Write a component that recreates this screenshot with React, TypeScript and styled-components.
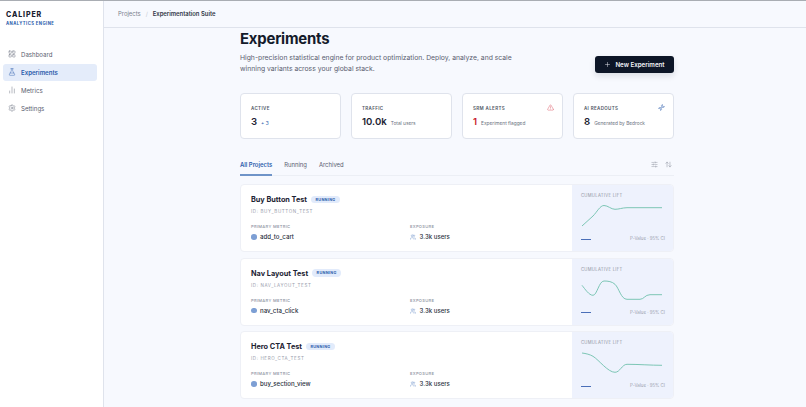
import React from "react";
import styled, { createGlobalStyle } from "styled-components";
import {
  ArrowUpDown,
  ChartNoAxesColumn,
  Dna,
  FlaskConical,
  LayoutGrid,
  Plus,
  Settings,
  SlidersHorizontal,
  TriangleAlert,
  Users,
} from "lucide-react";

const GlobalStyle = createGlobalStyle`
  html, body {
    margin: 0;
    height: 100%;
    overflow: hidden;
    background: #f7f9fe;
    font-family: Inter, "Liberation Sans", sans-serif;
    color: #141b2b;
  }
  * { box-sizing: border-box; }
`;

const navItems = [
  { label: "Dashboard", icon: LayoutGrid },
  { label: "Experiments", icon: FlaskConical, active: true },
  { label: "Metrics", icon: ChartNoAxesColumn },
  { label: "Settings", icon: Settings },
];

const experiments = [
  {
    name: "Buy Button Test",
    id: "ID: BUY_BUTTON_TEST",
    metric: "add_to_cart",
    line: "M1 23 L12 13 C16 9 19 2.5 23 2.5 C27 2.5 30 6.3 34 6.3 C38 6.3 41 4.8 46 4.7 L81 4.7",
  },
  {
    name: "Nav Layout Test",
    id: "ID: NAV_LAYOUT_TEST",
    metric: "nav_cta_click",
    line: "M1 8.3 C4 12 8 18.3 12 18.3 C16 18.3 18 4 23 4 C27 4 31 4.5 34 7.3 C38 11 40 22.3 46 22.3 L59 22.3 C63 22.3 64 17.7 69 17.7 L81 17.7",
  },
  {
    name: "Hero CTA Test",
    id: "ID: HERO_CTA_TEST",
    metric: "buy_section_view",
    line: "M1 3 C5 3.5 9 4.5 12 6.3 C18 10 27 22.3 34 22.3 C39 22.3 41 14.3 46 14.3 C58 14.3 70 15.3 81 15.3",
  },
];

const Shell = styled.div`
  display: flex;
  height: 407px;
  border-top: 1px solid #a9adb3;
`;

const Sidebar = styled.aside`
  flex: 0 0 104px;
  background: #fff;
  border-right: 1px solid #dfe3ec;
  padding: 9px 6px 0 3px;
`;

const Brand = styled.div`
  padding: 0 3px;
  height: 36px;
`;

const BrandName = styled.div`
  font-size: 7px;
  line-height: 9px;
  font-weight: 800;
  letter-spacing: 0.9px;
  color: #1a2130;
`;

const BrandSub = styled.div`
  margin-top: 2px;
  font-size: 4.2px;
  line-height: 6px;
  font-weight: 700;
  letter-spacing: 0.45px;
  color: #2a5bab;
`;

const Nav = styled.nav`
  display: flex;
  flex-direction: column;
  gap: 1.5px;
`;

const NavItem = styled.a<{ $active?: boolean }>`
  display: flex;
  align-items: center;
  gap: 5px;
  height: 16.5px;
  padding-left: 5px;
  border-radius: 3px;
  font-size: 6.1px;
  font-weight: ${(p) => (p.$active ? 600 : 400)};
  color: ${(p) => (p.$active ? "#2a5bab" : "#5a6070")};
  background: ${(p) => (p.$active ? "#e4ecfa" : "transparent")};
`;

const Main = styled.main`
  flex: 1;
  min-width: 0;
  display: flex;
  flex-direction: column;
`;

const TopBar = styled.header`
  flex: 0 0 27px;
  display: flex;
  align-items: center;
  gap: 5px;
  padding-left: 14px;
  padding-bottom: 1px;
  border-bottom: 1px solid #dfe3ec;
  font-size: 5.9px;
  color: #7a808d;
`;

const Crumb = styled.span`
  font-weight: 600;
  color: #2f3645;
`;

const CrumbSlash = styled.span`
  color: #c5c9d2;
`;

const Content = styled.div`
  width: 434px;
  margin-left: 136px;
  padding-top: 2px;
`;

const Head = styled.div`
  display: flex;
  justify-content: space-between;
  align-items: flex-end;
`;

const Title = styled.h1`
  margin: 0;
  font-size: 14.9px;
  line-height: 18px;
  font-weight: 700;
  letter-spacing: -0.2px;
  color: #141b2b;
`;

const Description = styled.p`
  margin: 4px 0 0;
  width: 290px;
  font-size: 6.8px;
  line-height: 11px;
  color: #5a6070;
`;

const NewButton = styled.button`
  display: flex;
  align-items: center;
  justify-content: center;
  gap: 4px;
  width: 79px;
  height: 17px;
  margin-bottom: 1px;
  border: none;
  border-radius: 3px;
  background: #0d1627;
  color: #f3f5fa;
  font: 600 6.2px Inter, sans-serif;
  box-shadow: 0 3px 6px rgba(13, 22, 39, 0.12);
`;

const Stats = styled.div`
  display: grid;
  grid-template-columns: repeat(4, 1fr);
  gap: 10px;
  margin-top: 19px;
`;

const StatCard = styled.div`
  position: relative;
  height: 46px;
  padding: 12px 10px 0;
  background: #fff;
  border: 1px solid #dfe3ec;
  border-radius: 4px;
`;

const StatLabel = styled.div`
  font-size: 4.5px;
  line-height: 6px;
  font-weight: 600;
  letter-spacing: 0.35px;
  color: #4e5563;
`;

const StatRow = styled.div`
  display: flex;
  align-items: baseline;
  gap: 4px;
  margin-top: 3px;
`;

const StatValue = styled.span<{ $alert?: boolean }>`
  font-size: 9.6px;
  line-height: 13px;
  font-weight: 600;
  color: ${(p) => (p.$alert ? "#c8192c" : "#1c2333")};
`;

const StatNote = styled.span<{ $accent?: boolean }>`
  font-size: 4.8px;
  color: ${(p) => (p.$accent ? "#2a5bab" : "#6b7180")};
`;

const StatIcon = styled.span`
  position: absolute;
  top: 10px;
  right: 8px;
  display: flex;
`;

const Tabs = styled.div`
  display: flex;
  align-items: flex-start;
  height: 18px;
  margin-top: 19px;
  gap: 12px;
  border-bottom: 1px solid #eceff5;
`;

const Tab = styled.div<{ $active?: boolean }>`
  height: 18px;
  font-size: 5.9px;
  line-height: 14px;
  font-weight: ${(p) => (p.$active ? 600 : 400)};
  color: ${(p) => (p.$active ? "#2a5bab" : "#5a6070")};
  border-bottom: ${(p) => (p.$active ? "2px solid #6f94c8" : "none")};
`;

const TabTools = styled.div`
  display: flex;
  gap: 7px;
  margin-left: auto;
  margin-top: 3px;
  margin-right: 2px;
  color: #6a7080;
`;

const List = styled.div`
  display: flex;
  flex-direction: column;
  gap: 5.5px;
  margin-top: 8px;
`;

const ExperimentCard = styled.article`
  display: flex;
  height: 68px;
  background: #fff;
  border: 1px solid #eef0f6;
  border-radius: 4px;
  overflow: hidden;
`;

const Info = styled.div`
  flex: 1;
  padding: 9px 10px 0;
`;

const NameRow = styled.div`
  display: flex;
  align-items: center;
  gap: 4px;
`;

const Name = styled.h2`
  margin: 0;
  font-size: 7.3px;
  line-height: 11px;
  font-weight: 700;
  color: #1c2333;
`;

const Badge = styled.span`
  padding: 0 4.5px;
  height: 7.5px;
  line-height: 7.5px;
  border-radius: 4px;
  background: #e2ebfb;
  color: #2a5bab;
  font-size: 3.8px;
  font-weight: 700;
  letter-spacing: 0.3px;
`;

const RefId = styled.div`
  margin-top: 4px;
  font-size: 4.5px;
  line-height: 6px;
  letter-spacing: 0.6px;
  color: #9aa0ad;
`;

const Columns = styled.div`
  display: grid;
  grid-template-columns: 159px 1fr;
  margin-top: 9px;
`;

const ColLabel = styled.div`
  font-size: 4.1px;
  line-height: 6px;
  font-weight: 500;
  letter-spacing: 0.3px;
  color: #8e94a2;
`;

const ColValue = styled.div`
  display: flex;
  align-items: center;
  gap: 3.5px;
  margin-top: 2px;
  font-size: 6.1px;
  line-height: 10px;
  font-weight: 500;
  color: #2a3140;
`;

const Dot = styled.span`
  width: 5.5px;
  height: 5.5px;
  border-radius: 50%;
  background: #7d9fd4;
`;

const ChartPane = styled.div`
  flex: 0 0 101px;
  padding: 8px 8px 0 9px;
  background: #eef2fd;
  display: flex;
  flex-direction: column;
`;

const ChartTitle = styled.div`
  font-size: 4.2px;
  line-height: 6px;
  letter-spacing: 0.3px;
  color: #8e94a2;
`;

const ChartFoot = styled.div`
  display: flex;
  align-items: center;
  justify-content: space-between;
  margin-top: 7px;
  font-size: 4.4px;
  line-height: 6px;
  color: #9aa0ad;
`;

const Legend = styled.span`
  width: 10px;
  height: 1px;
  background: #4a6fb8;
`;

const Spark = styled.svg`
  display: block;
  margin-top: 4px;
  overflow: visible;
`;

export default function App() {
  return (
    <>
      <GlobalStyle />
      <Shell>
        <Sidebar>
          <Brand>
            <BrandName>CALIPER</BrandName>
            <BrandSub>ANALYTICS ENGINE</BrandSub>
          </Brand>
          <Nav>
            {navItems.map((item) => (
              <NavItem key={item.label} $active={item.active}>
                <item.icon size={8} strokeWidth={1.3} />
                {item.label}
              </NavItem>
            ))}
          </Nav>
        </Sidebar>
        <Main>
          <TopBar>
            Projects <CrumbSlash>/</CrumbSlash>
            <Crumb>Experimentation Suite</Crumb>
          </TopBar>
          <Content>
            <Head>
              <div>
                <Title>Experiments</Title>
                <Description>
                  High-precision statistical engine for product optimization.
                  Deploy, analyze, and scale winning variants across your global
                  stack.
                </Description>
              </div>
              <NewButton>
                <Plus size={7} strokeWidth={1.6} />
                New Experiment
              </NewButton>
            </Head>
            <Stats>
              <StatCard>
                <StatLabel>ACTIVE</StatLabel>
                <StatRow>
                  <StatValue>3</StatValue>
                  <StatNote $accent>+ 3</StatNote>
                </StatRow>
              </StatCard>
              <StatCard>
                <StatLabel>TRAFFIC</StatLabel>
                <StatRow>
                  <StatValue>10.0k</StatValue>
                  <StatNote>Total users</StatNote>
                </StatRow>
              </StatCard>
              <StatCard>
                <StatLabel>SRM ALERTS</StatLabel>
                <StatIcon>
                  <TriangleAlert size={7} color="#d8404f" strokeWidth={1.4} />
                </StatIcon>
                <StatRow>
                  <StatValue $alert>1</StatValue>
                  <StatNote>Experiment flagged</StatNote>
                </StatRow>
              </StatCard>
              <StatCard>
                <StatLabel>AI READOUTS</StatLabel>
                <StatIcon>
                  <Dna size={7} color="#2a5bab" strokeWidth={1.6} />
                </StatIcon>
                <StatRow>
                  <StatValue>8</StatValue>
                  <StatNote>Generated by Bedrock</StatNote>
                </StatRow>
              </StatCard>
            </Stats>
            <Tabs>
              <Tab $active>All Projects</Tab>
              <Tab>Running</Tab>
              <Tab>Archived</Tab>
              <TabTools>
                <SlidersHorizontal size={7} strokeWidth={1.2} />
                <ArrowUpDown size={7} strokeWidth={1.3} />
              </TabTools>
            </Tabs>
            <List>
              {experiments.map((exp) => (
                <ExperimentCard key={exp.id}>
                  <Info>
                    <NameRow>
                      <Name>{exp.name}</Name>
                      <Badge>RUNNING</Badge>
                    </NameRow>
                    <RefId>{exp.id}</RefId>
                    <Columns>
                      <div>
                        <ColLabel>PRIMARY METRIC</ColLabel>
                        <ColValue>
                          <Dot />
                          {exp.metric}
                        </ColValue>
                      </div>
                      <div>
                        <ColLabel>EXPOSURE</ColLabel>
                        <ColValue>
                          <Users size={6} color="#5b84c4" strokeWidth={1.5} />
                          3.3k users
                        </ColValue>
                      </div>
                    </Columns>
                  </Info>
                  <ChartPane>
                    <ChartTitle>CUMULATIVE LIFT</ChartTitle>
                    <Spark width="81" height="26" viewBox="0 0 81 26" fill="none">
                      <path d={exp.line} stroke="#6fc1ad" strokeWidth="0.9" />
                    </Spark>
                    <ChartFoot>
                      <Legend />
                      P-Value · 95% CI
                    </ChartFoot>
                  </ChartPane>
                </ExperimentCard>
              ))}
            </List>
          </Content>
        </Main>
      </Shell>
    </>
  );
}
